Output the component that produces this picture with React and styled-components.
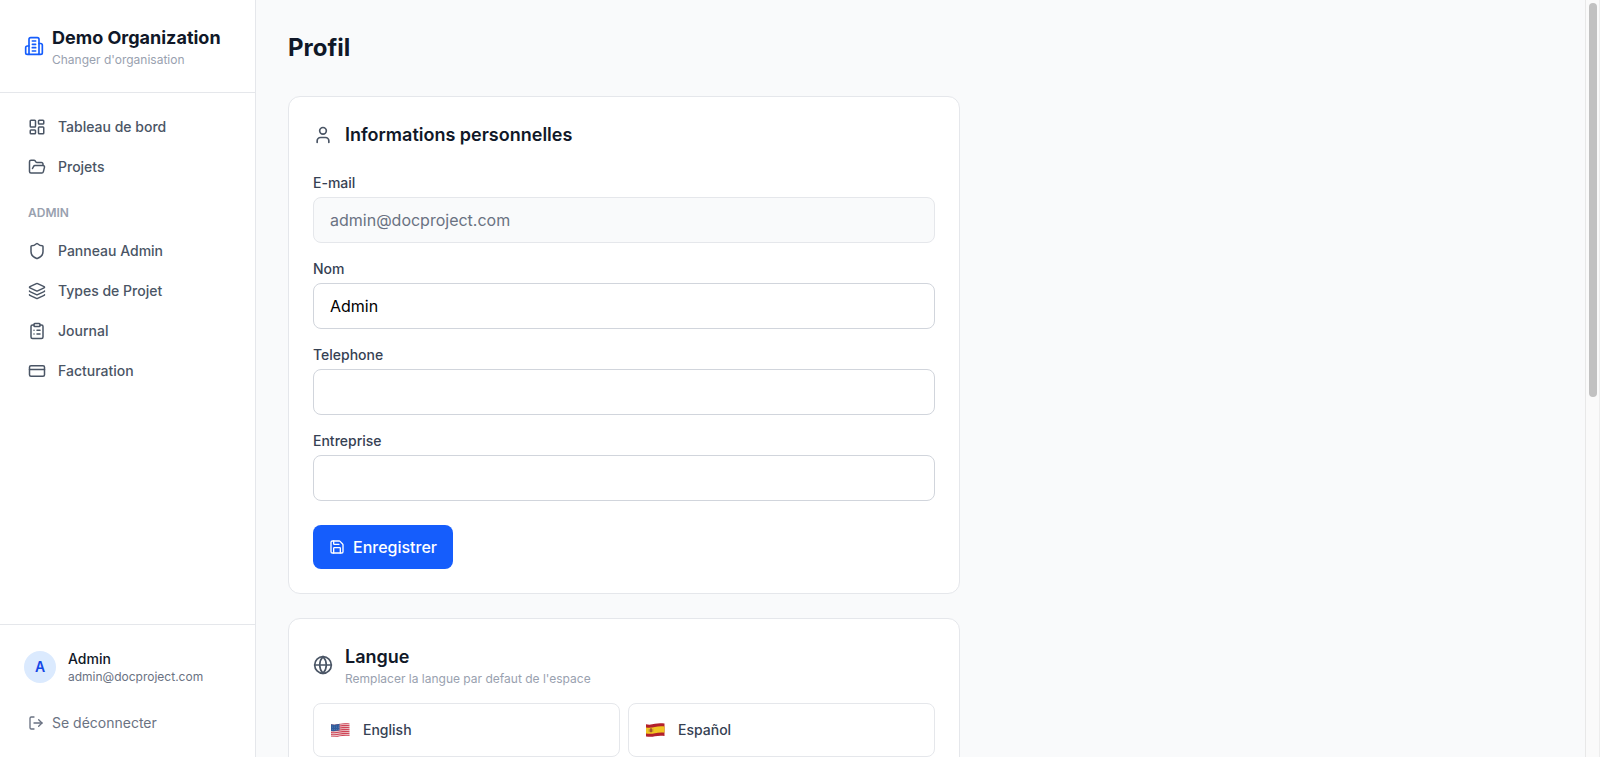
import React, { useState } from 'react';
import styled, { createGlobalStyle } from 'styled-components';
import {
  ClipboardList,
  CreditCard,
  FolderOpen,
  Globe,
  LayoutDashboard,
  Layers,
  LogOut,
  Save,
  Shield,
  User,
} from 'lucide-react';

const GlobalStyle = createGlobalStyle`
  * {
    box-sizing: border-box;
  }

  body {
    margin: 0;
    font-family: Inter, 'Liberation Sans', sans-serif;
    font-size: 16px;
    line-height: 24px;
    color: #101828;
    background-color: #f9fafb;
    -webkit-font-smoothing: antialiased;
  }

  h1, h2, p {
    margin: 0;
  }

  button, input {
    font: inherit;
  }
`;

const Layout = styled.div`
  display: flex;
  height: 100vh;
  overflow: hidden;
`;

const Sidebar = styled.aside`
  display: flex;
  flex-direction: column;
  flex-shrink: 0;
  width: 256px;
  background-color: #fff;
  border-right: 1px solid #e5e7eb;
`;

const OrgLink = styled.a`
  display: flex;
  align-items: center;
  gap: 8px;
  padding: 24px;
  border-bottom: 1px solid #e5e7eb;
  color: #155dfc;
  text-decoration: none;
`;

const OrgName = styled.p`
  font-size: 18px;
  line-height: 28px;
  font-weight: 700;
  color: #101828;
`;

const Hint = styled.p`
  font-size: 12px;
  line-height: 16px;
  color: #99a1af;
`;

const Nav = styled.nav`
  display: flex;
  flex-direction: column;
  flex: 1;
  gap: 4px;
  padding: 16px;
`;

const NavItem = styled.a`
  display: flex;
  align-items: center;
  gap: 12px;
  padding: 8px 12px;
  border-radius: 8px;
  font-size: 14px;
  line-height: 20px;
  font-weight: 500;
  color: #4a5565;
  text-decoration: none;

  &:hover {
    background-color: #f9fafb;
  }
`;

const NavLabel = styled.p`
  padding: 16px 12px 8px;
  font-size: 12px;
  line-height: 16px;
  font-weight: 600;
  color: #99a1af;
  text-transform: uppercase;
`;

const SidebarFooter = styled.div`
  display: flex;
  flex-direction: column;
  gap: 12px;
  padding: 16px;
  border-top: 1px solid #e5e7eb;
`;

const UserLink = styled.a`
  display: flex;
  align-items: center;
  gap: 12px;
  padding: 8px;
  border-radius: 8px;
  text-decoration: none;
`;

const Avatar = styled.span`
  display: flex;
  align-items: center;
  justify-content: center;
  width: 32px;
  height: 32px;
  border-radius: 50%;
  background-color: #dbeafe;
  color: #1447e6;
  font-size: 14px;
  font-weight: 600;
`;

const UserName = styled.p`
  font-size: 14px;
  line-height: 20px;
  font-weight: 500;
  color: #101828;
`;

const UserEmail = styled.p`
  font-size: 12px;
  line-height: 16px;
  color: #6a7282;
`;

const LogoutButton = styled.button`
  display: flex;
  align-items: center;
  gap: 8px;
  padding: 8px 12px;
  border: none;
  border-radius: 8px;
  background-color: transparent;
  font-size: 14px;
  line-height: 20px;
  color: #6a7282;
  cursor: pointer;
`;

const Main = styled.main`
  flex: 1;
  min-width: 0;
  padding: 32px;
  overflow-y: auto;
  scrollbar-width: none;
`;

const Content = styled.div`
  display: flex;
  flex-direction: column;
  gap: 24px;
  max-width: 672px;
`;

const Title = styled.h1`
  margin-bottom: 8px;
  font-size: 24px;
  line-height: 32px;
  font-weight: 700;
`;

const Card = styled.section`
  padding: 24px;
  background-color: #fff;
  border: 1px solid #e5e7eb;
  border-radius: 12px;
`;

const CardHeader = styled.div`
  display: flex;
  align-items: center;
  gap: 12px;
  margin-bottom: ${({ $gap }) => $gap};
  color: #4a5565;
`;

const CardTitle = styled.h2`
  font-size: 18px;
  line-height: 28px;
  font-weight: 600;
  color: #101828;
`;

const Form = styled.form`
  display: flex;
  flex-direction: column;
  gap: 16px;
`;

const Field = styled.div`
  display: flex;
  flex-direction: column;
  gap: 4px;
`;

const Label = styled.label`
  font-size: 14px;
  line-height: 20px;
  font-weight: 500;
  color: #364153;
`;

const Input = styled.input`
  width: 100%;
  height: 46px;
  padding: 10px 16px;
  border: 1px solid #d1d5dc;
  border-radius: 8px;
  background-color: #fff;
  color: #000;
  outline: none;

  &:focus {
    border-color: #155dfc;
  }

  &:disabled {
    border-color: #e5e7eb;
    background-color: #f9fafb;
    color: #6a7282;
  }
`;

const SaveButton = styled.button`
  display: flex;
  align-items: center;
  align-self: flex-start;
  gap: 8px;
  margin-top: 8px;
  padding: 10px 16px;
  border: none;
  border-radius: 8px;
  background-color: #155dfc;
  color: #fff;
  font-weight: 500;
  cursor: pointer;

  &:hover {
    background-color: #1447e6;
  }
`;

const LanguageGrid = styled.div`
  display: grid;
  grid-template-columns: repeat(2, 1fr);
  gap: 8px;
`;

const LanguageButton = styled.button`
  display: flex;
  align-items: center;
  gap: 12px;
  height: 54px;
  padding: 12px 16px;
  border: 1px solid #e5e7eb;
  border-radius: 8px;
  background-color: #fff;
  font-size: 14px;
  line-height: 20px;
  font-weight: 500;
  color: #364153;
  cursor: pointer;
`;

const ScrollTrack = styled.div`
  flex-shrink: 0;
  width: 15px;
  padding: 3px 2px 3px 3px;
  background-color: #fafafa;
  border-left: 1px solid #e8e8e8;
  border-right: 1px solid #ededed;
`;

const ScrollThumb = styled.div`
  width: 8px;
  height: 52.5%;
  border-radius: 4px;
  background-color: #c1c1c1;
`;

const BuildingIcon = () => (
  <svg
    width="20"
    height="20"
    viewBox="0 0 24 24"
    fill="none"
    stroke="currentColor"
    strokeWidth="2"
    strokeLinecap="round"
    strokeLinejoin="round"
    aria-hidden="true"
  >
    <path d="M6 22V4a2 2 0 0 1 2-2h8a2 2 0 0 1 2 2v18Z" />
    <path d="M6 12H4a2 2 0 0 0-2 2v6a2 2 0 0 0 2 2h2" />
    <path d="M18 9h2a2 2 0 0 1 2 2v9a2 2 0 0 1-2 2h-2" />
    <path d="M10 6h4M10 10h4M10 14h4M10 18h4" />
  </svg>
);

const FLAG_SHAPE = 'M1 2.2C4 3 7 2.6 10 1.8S16.5 1 19.500 1.6V14C16.5 13.4 13 13.6 10 14.3S4 15 1 14.4Z';

const UsFlag = () => (
  <svg width="21" height="16" viewBox="0 0 21 16" aria-hidden="true">
    <defs>
      <clipPath id="us-shape">
        <path d={FLAG_SHAPE} />
      </clipPath>
    </defs>
    <g clipPath="url(#us-shape)">
      <rect width="21" height="16" fill="#eccfd2" />
      <g fill="none" stroke="#cf4456" strokeWidth="1.1">
        {[0, 2, 4, 6, 8, 10, 12].map((y) => (
          <path key={y} d={`M0 ${y + 2.4}C4 ${y + 3.2} 7 ${y + 2.8} 10 ${y + 2}S17 ${y + 1.2} 21 ${y + 2}`} />
        ))}
      </g>
      <path d="M0 1H9.5V8.3C7 9 4 9.4 0 9Z" fill="#2f5c9c" />
      <g fill="#a9bcd9">
        {[2.2, 4.2, 6.2, 8.2].map((x) => [4, 5.8, 7.4].map((y) => (
          <circle key={`${x}-${y}`} cx={x} cy={y} r="0.3" />
        )))}
      </g>
    </g>
  </svg>
);

const EsFlag = () => (
  <svg width="21" height="16" viewBox="0 0 21 16" aria-hidden="true">
    <defs>
      <clipPath id="es-shape">
        <path d={FLAG_SHAPE} />
      </clipPath>
    </defs>
    <g clipPath="url(#es-shape)">
      <rect width="21" height="16" fill="#b3202c" />
      <path d="M0 5.2C4 6 7 5.6 10 4.9S17 4 21 4.7V11C17 10.3 13 10.6 10 11.3S4 12 0 11.5Z" fill="#f1c522" />
      <rect x="4.5" y="6.8" width="3" height="3.4" rx="1" fill="#a8552a" />
      <path d="M3.7 7v3M8.2 6.8v3" stroke="#c99a3c" strokeWidth="0.6" />
      <rect x="5" y="6" width="2" height="1" fill="#b98224" />
    </g>
  </svg>
);

const mainLinks = [
  { label: 'Tableau de bord', icon: LayoutDashboard },
  { label: 'Projets', icon: FolderOpen },
];

const adminLinks = [
  { label: 'Panneau Admin', icon: Shield },
  { label: 'Types de Projet', icon: Layers },
  { label: 'Journal', icon: ClipboardList },
  { label: 'Facturation', icon: CreditCard },
];

const NavLinks = ({ links }) =>
  links.map(({ label, icon: Icon }) => (
    <NavItem href="#" key={label}>
      <Icon size={18} />
      {label}
    </NavItem>
  ));

const App = () => {
  const [profile, setProfile] = useState({ name: 'Admin', phone: '', company: '' });

  const handleChange = (e) => {
    setProfile({ ...profile, [e.target.name]: e.target.value });
  };

  return (
    <>
      <GlobalStyle />
      <Layout>
        <Sidebar>
          <OrgLink href="#">
            <BuildingIcon />
            <div>
              <OrgName>Demo Organization</OrgName>
              <Hint>Changer d'organisation</Hint>
            </div>
          </OrgLink>
          <Nav>
            <NavLinks links={mainLinks} />
            <NavLabel>Admin</NavLabel>
            <NavLinks links={adminLinks} />
          </Nav>
          <SidebarFooter>
            <UserLink href="#">
              <Avatar>A</Avatar>
              <div>
                <UserName>Admin</UserName>
                <UserEmail>admin@docproject.com</UserEmail>
              </div>
            </UserLink>
            <LogoutButton type="button">
              <LogOut size={16} />
              Se déconnecter
            </LogoutButton>
          </SidebarFooter>
        </Sidebar>

        <Main>
          <Content>
            <Title>Profil</Title>

            <Card>
              <CardHeader $gap="24px">
                <User size={20} />
                <CardTitle>Informations personnelles</CardTitle>
              </CardHeader>
              <Form onSubmit={(e) => e.preventDefault()}>
                <Field>
                  <Label htmlFor="email">E-mail</Label>
                  <Input id="email" type="email" value="admin@docproject.com" disabled />
                </Field>
                <Field>
                  <Label htmlFor="name">Nom</Label>
                  <Input id="name" name="name" value={profile.name} onChange={handleChange} />
                </Field>
                <Field>
                  <Label htmlFor="phone">Telephone</Label>
                  <Input id="phone" name="phone" type="tel" value={profile.phone} onChange={handleChange} />
                </Field>
                <Field>
                  <Label htmlFor="company">Entreprise</Label>
                  <Input id="company" name="company" value={profile.company} onChange={handleChange} />
                </Field>
                <SaveButton type="submit">
                  <Save size={16} />
                  Enregistrer
                </SaveButton>
              </Form>
            </Card>

            <Card>
              <CardHeader $gap="16px">
                <Globe size={20} />
                <div>
                  <CardTitle>Langue</CardTitle>
                  <Hint>Remplacer la langue par defaut de l'espace</Hint>
                </div>
              </CardHeader>
              <LanguageGrid>
                <LanguageButton type="button">
                  <UsFlag />
                  English
                </LanguageButton>
                <LanguageButton type="button">
                  <EsFlag />
                  Español
                </LanguageButton>
              </LanguageGrid>
            </Card>
          </Content>
        </Main>

        <ScrollTrack aria-hidden="true">
          <ScrollThumb />
        </ScrollTrack>
      </Layout>
    </>
  );
};

export default App;
